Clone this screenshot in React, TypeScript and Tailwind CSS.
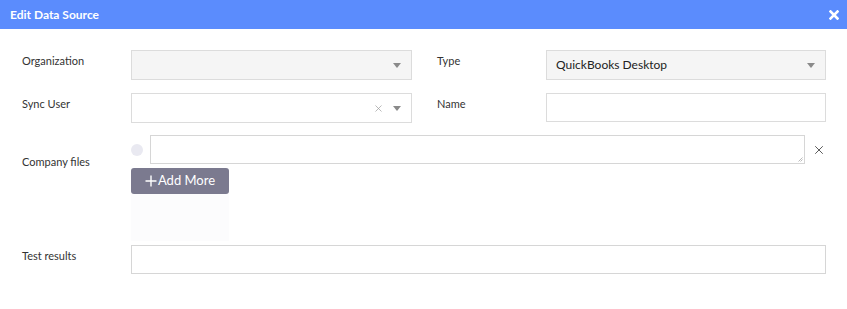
import { X } from 'lucide-react'

function Caret() {
  return (
    <svg width="8" height="5" viewBox="0 0 8 5" className="shrink-0">
      <path d="M0 0h8L4 5z" fill="#8a8a8a" />
    </svg>
  )
}

function Label({ children }: { children: React.ReactNode }) {
  return <div className="w-[109px] shrink-0 pt-[3px] text-[11px] text-[#333]">{children}</div>
}

export default function App() {
  return (
    <div className="h-[309px] w-[847px] bg-white font-['Lato',sans-serif]">
      {/* Header */}
      <div className="flex h-[29px] items-center justify-between bg-[#5b8cfd] pl-[10px] pr-[8px]">
        <span className="text-[12px] font-bold text-white">Edit Data Source</span>
        <svg width="10" height="10" viewBox="0 0 10 10">
          <path d="M1.5 1.5l7 7M8.5 1.5l-7 7" stroke="white" strokeWidth="2.6" strokeLinecap="square" />
        </svg>
      </div>

      <div className="pl-[22px] pr-[21px] pt-[21px]">
        {/* Row 1 */}
        <div className="flex">
          <Label>Organization</Label>
          <div className="flex h-[30px] w-[281px] items-center justify-end border border-[#dcdcdc] bg-[#f5f5f5] pr-[10px]">
            <Caret />
          </div>
          <div className="w-[25px]" />
          <Label>Type</Label>
          <div className="flex h-[30px] flex-1 items-center justify-between border border-[#dcdcdc] bg-[#f5f5f5] pl-[9px] pr-[10px]">
            <span className="text-[12px] text-[#222]">QuickBooks Desktop</span>
            <Caret />
          </div>
        </div>

        {/* Row 2 */}
        <div className="mt-[13px] flex">
          <Label>Sync User</Label>
          <div className="flex h-[30px] w-[281px] items-center justify-end gap-[9px] border border-[#dcdcdc] bg-white pr-[10px]">
            <X size={11} strokeWidth={1.5} color="#9a9a9a" />
            <Caret />
          </div>
          <div className="w-[25px]" />
          <Label>Name</Label>
          <div className="h-[29px] flex-1 border border-[#dcdcdc] bg-white" />
        </div>

        {/* Company files */}
        <div className="mt-[12px] flex">
          <div className="w-[109px] shrink-0 pt-[19px] text-[11px] text-[#333]">Company files</div>
          <div className="flex-1">
            <div className="flex items-center">
              <div className="mr-[7px] h-[12px] w-[12px] shrink-0 rounded-full bg-[#e9e9f1]" />
              <div className="relative h-[29px] flex-1 border border-[#d6d6d6] bg-white">
                <svg width="5" height="5" viewBox="0 0 5 5" className="absolute bottom-[1px] right-[1px]">
                  <path d="M4.5 0.5L0.5 4.5M4.5 2.5L2.5 4.5" stroke="#aaa" strokeWidth="0.8" />
                </svg>
              </div>
              <div className="flex w-[21px] justify-end">
                <X size={14} strokeWidth={1.5} color="#444" />
              </div>
            </div>
            <button className="mt-[4px] flex h-[26px] w-[98px] items-center justify-center gap-[1px] rounded-[3px] bg-[#7b7a8f] text-[13px] text-white">
              <svg width="12" height="12" viewBox="0 0 12 12">
                <path d="M6 0.5v11M0.5 6h11" stroke="white" strokeWidth="1.4" />
              </svg>
              Add More
            </button>
            <div className="h-[47px] w-[98px] bg-[#fcfcfd]" />
          </div>
        </div>

        {/* Test results */}
        <div className="mt-[4px] flex">
          <Label>Test results</Label>
          <div className="h-[29px] flex-1 border border-[#d6d6d6] bg-white" />
        </div>
      </div>
    </div>
  )
}
